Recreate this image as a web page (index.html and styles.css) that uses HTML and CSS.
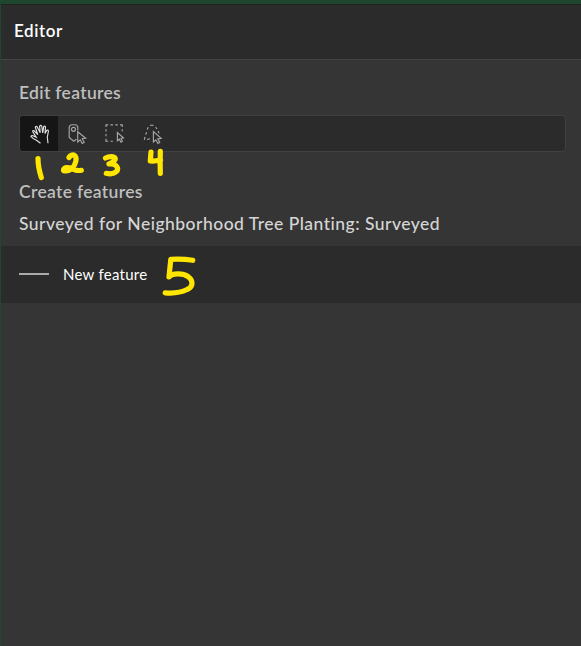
FILE: index.html
```html
<!DOCTYPE html>
<html lang="en">
<head>
<meta charset="utf-8">
<title>Editor</title>
<link rel="stylesheet" href="styles.css">
</head>
<body>
<main class="panel">
  <header class="header"><h1 class="title">Editor</h1></header>
  <section class="edit">
    <h2 class="heading edit-heading">Edit features</h2>
    <div class="toolbar">
      <button class="tool active" aria-label="Pan">
        <svg viewBox="0 0 38 34"><path d="M20.5 26.3 16.5 23.2Q13 21.8 11 19.6Q11 18.3 13 18.8L16.2 20.2 12.7 14.6Q12.7 13 14.2 13.8L17.8 17.6 15.3 10.3Q16 8.6 17.3 10L20.2 15.8 19.6 9.2Q20.5 7.6 21.8 9.2L22.7 15.8 23.8 9.4Q25 8.3 25.5 10L25 16.5 26.8 13.3Q28.6 12.7 28.4 14.5L27.3 20 28 26.2"/></svg>
      </button>
      <button class="tool" aria-label="Select">
        <svg viewBox="0 0 38 34"><path d="M18.3 22.2 15.8 24.3 11.2 20.5V10.7Q11.2 7.7 14.2 7.7H16.8Q19.8 7.7 19.8 10.7V13.5"/><circle cx="15.5" cy="12.3" r="2"/><path d="M19.7 14.7V25L22.2 22.8 24.2 26.4 26.2 25.2 24.2 21.8 27.7 21.2Z"/></svg>
      </button>
      <button class="tool" aria-label="Select by rectangle">
        <svg viewBox="0 0 38 34"><path d="M10 10V7.8H12.2M14.5 7.8H17M19.3 7.8H21.8M24 7.8H26.2V10M10 12.2V14.5M10 17V19.3M10 21.7V24.2H12.2M14.5 24.2H17M26.2 12.2V14.5"/><path d="M21.4 15.5V23.8L23.3 22.2 25 25.2 26.4 24.3 25 21.5 27.5 21Z"/></svg>
      </button>
      <button class="tool" aria-label="Select by lasso">
        <svg viewBox="0 0 38 34"><path d="M10.3 22.8 11 19.8M11.7 17.6 12.6 15.2M13.2 12.6 14.2 10.2M16 8.3 19.5 8.4M21.5 10 23 12M24.3 14 25 16.3M13 22.5 16 21.8"/><path d="M19.4 14.5V25L21.8 22.8 23.9 26.4 25.8 25.2 23.8 21.9 27.2 21.4Z"/></svg>
      </button>
    </div>
  </section>
  <section>
    <h2 class="heading create-heading">Create features</h2>
    <h3 class="layer">Surveyed for Neighborhood Tree Planting: Surveyed</h3>
    <div class="template"><span class="swatch"></span><span class="template-name">New feature</span></div>
  </section>
</main>
<svg class="notes" viewBox="0 0 581 646" aria-hidden="true">
  <path d="M38 158.5Q38 167 41.3 177.5"/>
  <path d="M69 157.5Q71 154.5 74 155C78 157 75.5 165 72 168.5Q67 172 63.5 170.5C63 166.5 70 167 74 169.5Q78 171 81.3 170.3"/>
  <path d="M105.5 158Q109 156.3 113 156.8C118.5 158 113 162.5 109 164C115 163 119 167 117 171Q113 175 106.3 173.3"/>
  <path d="M151 152 150.3 161Q155 161.5 160.5 159.8M160.3 151.3Q160 164 160.3 173.3"/>
  <path d="M192.7 260.3Q182 258.5 170.8 259.3L169 277C172 273 183 273 188 276.5C194 281 193 287 187 289.5Q178 294 165.2 292.8"/>
</svg>
</body>
</html>
```
FILE: styles.css
```css
* { box-sizing: border-box; }
body { margin: 0; background: #353535; color: #fff; font-family: Lato, "Liberation Sans", sans-serif; }
h1, h2, h3 { margin: 0; white-space: nowrap; }
.panel { height: 646px; border-top: 4px solid #1f472f; border-left: 1px solid #1f472f; overflow: hidden; }
.header { height: 56px; padding: 15px 13px; background: #2b2b2b; border-top: 1px solid #222; border-bottom: 1px solid #444; }
.title { font-size: 17px; line-height: 22px; font-weight: 600; letter-spacing: .6px; }
.edit { padding: 22px 15px 0 18px; }
.heading { font-size: 17.5px; line-height: 22px; font-weight: 600; letter-spacing: .32px; color: #bfbfbf; }
.toolbar { display: flex; height: 37px; margin-top: 11px; background: #2b2b2b; border: 1px solid #404040; border-radius: 4px; overflow: hidden; }
.tool { width: 38px; height: 35px; padding: 0; border: 0; background: transparent; color: #a5a5a5; }
.tool.active { background: #151515; color: #e0e0e0; }
.tool svg { display: block; width: 38px; height: 34px; fill: none; stroke: currentColor; stroke-width: 1.15; }
.create-heading { margin: 29px 0 0 18px; }
.layer { margin: 10px 0 0 18px; font-size: 17.5px; line-height: 22px; font-weight: 500; letter-spacing: .48px; color: #d5d5d5; }
.template { display: flex; align-items: center; gap: 14px; height: 57px; margin-top: 11px; padding: 0 18px 2px; background: #2b2b2b; }
.swatch { width: 30px; height: 2px; background: #aaa; }
.template-name { font-size: 15px; line-height: 20px; letter-spacing: .27px; }
.notes { position: absolute; inset: 0; width: 581px; height: 646px; pointer-events: none; fill: none; stroke: #ffe600; stroke-width: 5.2; stroke-linecap: round; stroke-linejoin: round; }
```
